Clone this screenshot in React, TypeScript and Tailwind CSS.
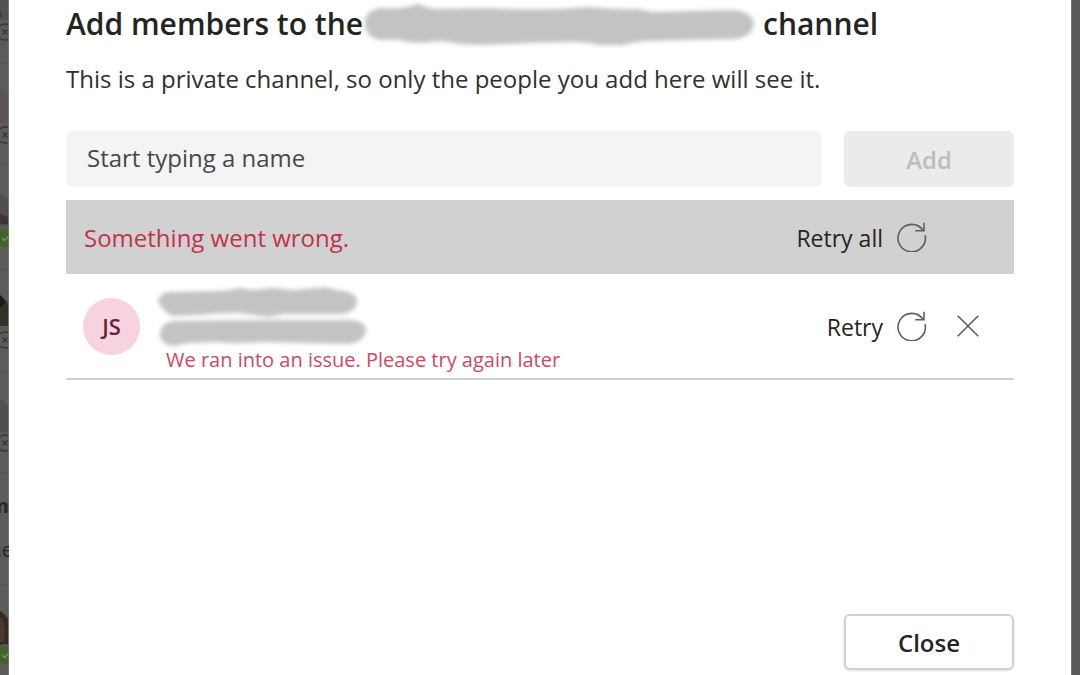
import { useState } from "react";

const CLOSED_BADGES = [32, 135, 340, 443];
const ONLINE_BADGES = [238, 655];

/** Dimmed edge of the members list that stays visible behind the dialog */
function BackdropEdge() {
  return (
    <div
      aria-hidden="true"
      className="relative w-[9px] shrink-0 overflow-hidden bg-[#5c5b59] font-['Open_Sans',sans-serif]"
    >
      <svg className="absolute top-0 left-0" width="9" height="675" viewBox="0 0 9 675">
        {/* avatars */}
        <path d="M0 0h9v20H0z" fill="#4d5356" />
        <path d="M0 11q3 4 0 8z" fill="#3e3935" />
        <path d="M0 90q5 2 9 8v25H0z" fill="#5e5256" />
        <path d="M0 193q6 3 9 9v24H0z" fill="#514f4f" />
        <path d="M0 214l9 3v7H0z" fill="#41362f" />
        <path d="M0 295q6 4 9 11v20H0z" fill="#343128" />
        <path d="M0 295l6 7-6 6z" fill="#1c1a19" />
        <path d="M0 399q6 3 9 9v24H0z" fill="#505051" />
        <path d="M0 611q6 3 9 10v24H0z" fill="#3a2a24" />
        <path d="M0 617q6 4 4 25H0z" fill="#4b3934" />
        {/* row separators */}
        <path
          d="M0 63.500h9M0 164.500h9M0 269.500h9M0 371.500h9M0 473.500h9M0 585.500h9"
          stroke="#555452"
        />
        {CLOSED_BADGES.map((y) => (
          <g key={y} fill="none" stroke="#353433">
            <circle cx="5" cy={y} r="10" fill="#5c5b59" stroke="none" />
            <circle cx="5" cy={y} r="8" strokeWidth="1.300" />
            <path d={`M2.500 ${y - 2.5}l5 5m0-5l-5 5`} strokeWidth="1.300" />
          </g>
        ))}
        {ONLINE_BADGES.map((y) => (
          <g key={y}>
            <circle cx="5" cy={y} r="11" fill="#5c5b59" />
            <circle cx="5" cy={y} r="9" fill="#40642a" />
            <path d={`M2 ${y}l2.500 2.500l5-5`} fill="none" stroke="#77906a" strokeWidth="1.500" />
          </g>
        ))}
        <path d="M8.500 0v675" stroke="#747372" />
      </svg>
      <div className="relative flex w-[9px] flex-col items-end pt-[492px] text-[20px] leading-7 text-[#262524]">
        <span className="font-bold">m</span>
        <span className="-mr-1 mt-4">ne</span>
      </div>
    </div>
  );
}

function RetryIcon() {
  return (
    <svg
      width="30"
      height="30"
      viewBox="0 0 30 30"
      fill="none"
      stroke="#5f5e5d"
      strokeWidth="1.600"
      aria-hidden="true"
    >
      <path d="M28.100 13.200A13.700 13.700 0 1 1 26 8.300" />
      <path d="M27 0.800V8.800H18.300" />
    </svg>
  );
}

function CloseIcon() {
  return (
    <svg width="22" height="22" viewBox="0 0 22 22" stroke="#5f5e5d" strokeWidth="1.600" aria-hidden="true">
      <path d="M0.700 0.700l20.600 20.600M21.300 0.700L0.700 21.300" />
    </svg>
  );
}

/** Brushed-out channel name */
function HiddenChannel() {
  return (
    <svg
      className="shrink-0 overflow-visible"
      width="392"
      height="44"
      viewBox="0 0 392 44"
      role="img"
      aria-label="Hidden channel name"
    >
      <path
        d="M2 21C2 12 8 6 22 6Q35 7 43 5L55 2Q60 5 74 7L125 6Q160 8 196 7L225 5Q265 8 275 7L290 10L365 8Q389 8 391 21Q390 35 372 37L285 39Q270 40 260 43L235 43Q230 41 210 40L165 41L120 43L95 42Q80 37 60 41L45 40Q35 37 22 38Q2 38 2 21Z"
        fill="#c3c3c3"
        style={{ filter: "blur(2.2px)" }}
      />
    </svg>
  );
}

/** Brushed-out name and address of the person */
function HiddenPerson() {
  return (
    <svg
      className="overflow-visible"
      width="216"
      height="64"
      viewBox="0 0 216 64"
      role="img"
      aria-label="Hidden member"
    >
      <g fill="#c3c3c3" style={{ filter: "blur(2.2px)" }}>
        <path d="M4 18Q5 8 17 8L65 7Q78 6 85 4L100 6L118 4L140 6L172 3L182 6Q203 7 203 18Q201 29 187 30L130 30L115 33L100 31L85 29Q60 29 46 31L20 32Q12 31 4 18Z" />
        <path d="M6 49Q8 38 20 37L115 36L195 36Q212 37 212 46Q210 59 193 60L110 58Q75 60 65 58L34 59L20 62Q6 61 6 49Z" />
      </g>
    </svg>
  );
}

export default function App() {
  const [name, setName] = useState("");

  return (
    <div className="flex min-h-screen bg-[#5a5958] font-['Open_Sans',sans-serif] text-[#242424]">
      <BackdropEdge />

      <main
        role="dialog"
        aria-labelledby="dialog-title"
        className="flex min-w-0 flex-1 flex-col bg-white px-[57px] pb-[5px]"
      >
        <h1
          id="dialog-title"
          className="flex h-12 items-center text-[30px] leading-[48px] font-semibold whitespace-nowrap"
        >
          Add members to the
          <HiddenChannel />
          <span className="ml-2">channel</span>
        </h1>
        <p className="mt-[13px] text-[24px] leading-9 whitespace-nowrap text-[#303030]">
          This is a private channel, so only the people you add here will see it.
        </p>

        <form className="mt-[34px] flex gap-[22px]" onSubmit={(e) => e.preventDefault()}>
          <input
            type="text"
            aria-label="Member name"
            placeholder="Start typing a name"
            value={name}
            onChange={(e) => setName(e.target.value)}
            className="h-14 min-w-0 flex-1 rounded-md bg-[#f4f4f4] px-[21px] pb-[3px] text-[24px] placeholder:text-[#484848]"
          />
          <button
            type="submit"
            disabled
            className="h-14 w-[170px] rounded-md bg-[#ebebeb] pt-[2px] text-[24px] font-semibold text-[#bdbdbd]"
          >
            Add
          </button>
        </form>

        <div className="mt-[13px] flex h-[74px] items-center justify-between bg-[#d1d1d1] pr-[87px] pl-[18px] text-[24px]">
          <p className="pt-[2px] text-[#c4314b]">Something went wrong.</p>
          <button type="button" className="flex items-center gap-[14px] text-[23px]">
            <span className="pt-[2px]">Retry all</span>
            <RetryIcon />
          </button>
        </div>

        <ul>
          <li className="flex h-[106px] items-center border-b-2 border-[#d1d1d1] pr-[35px] pl-[17px]">
            <div className="flex size-[57px] items-center justify-center rounded-full bg-[#f6d3df] text-[22px] font-semibold text-[#6b1f3e]">
              JS
            </div>
            <div className="ml-[14px] pt-1">
              <HiddenPerson />
              <p className="ml-3 text-[20px] leading-6 whitespace-nowrap text-[#cc4a62]">
                We ran into an issue. Please try again later
              </p>
            </div>
            <div className="ml-auto flex items-center gap-[30px]">
              <button type="button" className="flex items-center gap-[14px] text-[23px]">
                <span className="pt-[2px]">Retry</span>
                <RetryIcon />
              </button>
              <button type="button" aria-label="Remove">
                <CloseIcon />
              </button>
            </div>
          </li>
        </ul>

        <div className="mt-auto flex justify-end">
          <button
            type="button"
            className="h-14 w-[170px] rounded-md border-2 border-[#d1d1d1] bg-white pt-[2px] text-[24px] font-semibold shadow-sm"
          >
            Close
          </button>
        </div>
      </main>

      <div aria-hidden="true" className="w-[9px] shrink-0 border-l border-[#747372] bg-[#5a5958]" />
    </div>
  );
}
